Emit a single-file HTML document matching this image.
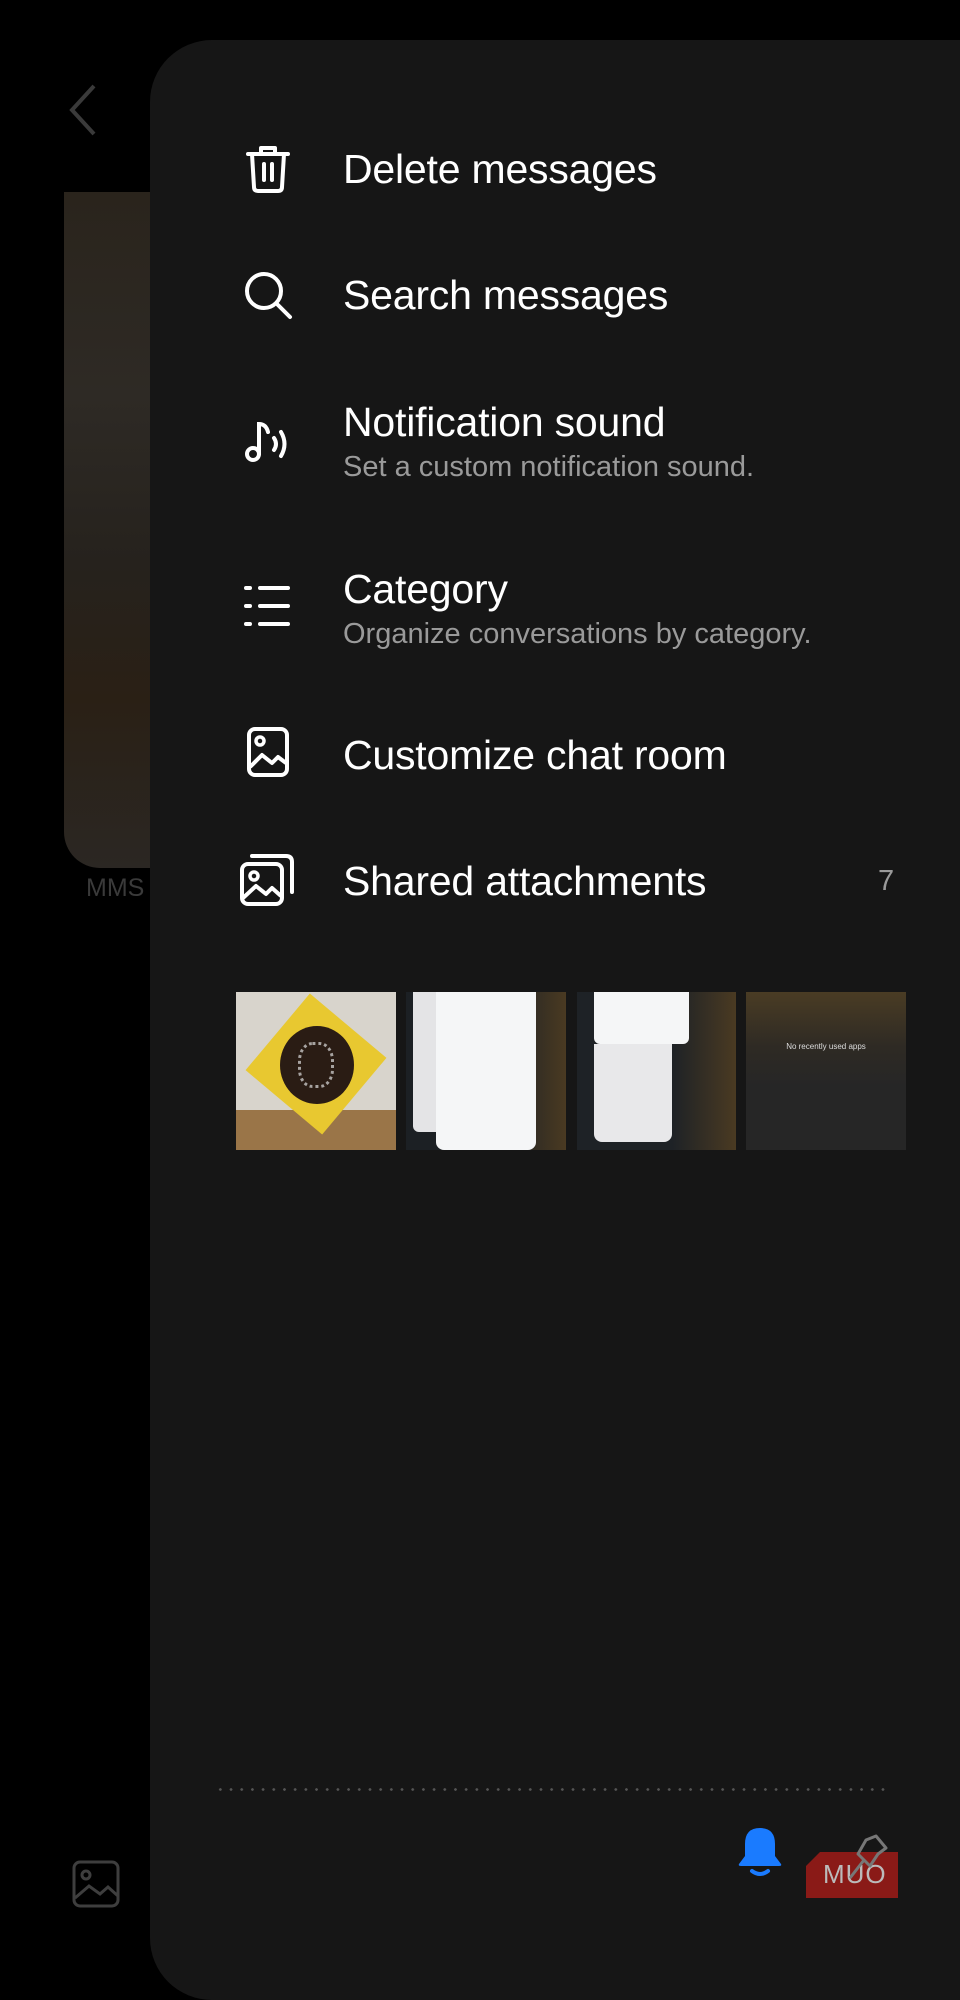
<!DOCTYPE html>
<html><head><meta charset="utf-8"><style>
*{margin:0;padding:0;box-sizing:border-box}
html,body{width:960px;height:1968px;background:#000;overflow:hidden;font-family:"Liberation Sans",sans-serif}
.abs{position:absolute}
.panel{position:absolute;left:150px;top:40px;width:840px;height:1960px;background:#161616;border-radius:62px 0 0 62px}
.t{position:absolute;left:343px;color:#fff;font-size:41px;white-space:nowrap;letter-spacing:-0.2px}
.s{position:absolute;left:343px;color:#9a9a9a;font-size:29px;white-space:nowrap}
.ic{position:absolute;left:240px;width:56px;height:56px}
svg{overflow:visible}
</style></head><body>
<svg class="abs" style="left:66px;top:84px" width="32" height="52"><path d="M28 2 L6 26 L28 50" stroke="#3a3a3a" stroke-width="4" fill="none"/></svg>
<div class="abs" style="left:64px;top:192px;width:120px;height:676px;border-radius:0 0 0 36px;background:linear-gradient(180deg,#2a241c 0%,#2e2a25 30%,#26221d 55%,#2a2015 75%,#2b2723 100%)"></div>
<div class="abs" style="left:86px;top:874px;color:#3a3a3a;font-size:25px">MMS</div>
<svg class="abs" style="left:72px;top:1860px" width="48" height="48"><rect x="2" y="2" width="44" height="44" rx="6" stroke="#3e3e3e" stroke-width="3" fill="none"/><circle cx="14" cy="15" r="4" stroke="#3e3e3e" stroke-width="3" fill="none"/><path d="M3 38 L17 26 L28 34 L36 27 L46 36" stroke="#3e3e3e" stroke-width="3" fill="none"/></svg>

<div class="panel"></div>

<svg class="ic" style="top:140px" viewBox="0 0 56 56"><path d="M8 14 H48 M21 14 V8 H35 V14 M12 14 L14 47 Q14 51 18 51 H38 Q42 51 42 47 L44 14 M24 24 V40 M32 24 V40" stroke="#fff" stroke-width="4" fill="none" stroke-linecap="round" stroke-linejoin="round"/></svg>
<div class="t" style="top:146px">Delete messages</div>

<svg class="ic" style="top:267px" viewBox="0 0 56 56"><circle cx="24" cy="24" r="17" stroke="#fff" stroke-width="4" fill="none"/><path d="M37 37 L50 50" stroke="#fff" stroke-width="4" stroke-linecap="round"/></svg>
<div class="t" style="top:272px">Search messages</div>

<svg class="ic" style="top:412px" viewBox="0 0 56 56"><circle cx="13" cy="42" r="6" stroke="#fff" stroke-width="4" fill="none"/><path d="M19 42 V12 Q26 12 28 20 M34 26 Q38 32 34 38 M41 20 Q48 32 41 44" stroke="#fff" stroke-width="4" fill="none" stroke-linecap="round"/></svg>
<div class="t" style="top:399px">Notification sound</div>
<div class="s" style="top:451px">Set a custom notification sound.</div>

<svg class="ic" style="top:578px" viewBox="0 0 56 56"><path d="M6 10 H10 M20 10 H48 M6 28 H10 M20 28 H48 M6 46 H10 M20 46 H48" stroke="#fff" stroke-width="4" stroke-linecap="round"/></svg>
<div class="t" style="top:566px">Category</div>
<div class="s" style="top:618px">Organize conversations by category.</div>

<svg class="ic" style="top:725px" viewBox="0 0 56 56"><rect x="9" y="4" width="38" height="46" rx="6" stroke="#fff" stroke-width="4" fill="none"/><circle cx="20" cy="16" r="4" stroke="#fff" stroke-width="3.5" fill="none"/><path d="M10 42 L22 30 L32 38 L38 32 L46 38" stroke="#fff" stroke-width="4" fill="none" stroke-linejoin="round"/></svg>
<div class="t" style="top:732px">Customize chat room</div>

<svg class="ic" style="top:852px" viewBox="0 0 56 56"><rect x="2" y="12" width="40" height="40" rx="6" stroke="#fff" stroke-width="4" fill="none"/><path d="M12 4 H46 Q52 4 52 10 V40" stroke="#fff" stroke-width="4" fill="none" stroke-linecap="round"/><circle cx="14" cy="24" r="4" stroke="#fff" stroke-width="3.5" fill="none"/><path d="M3 46 L16 34 L26 42 L32 36 L41 44" stroke="#fff" stroke-width="4" fill="none" stroke-linejoin="round"/></svg>
<div class="t" style="top:858px">Shared attachments</div>
<div class="abs" style="left:878px;top:865px;color:#9a9a9a;font-size:29px">7</div>

<div class="abs" style="left:236px;top:992px;width:160px;height:158px;background:#d8d4cc;overflow:hidden">
 <div class="abs" style="left:0;top:118px;width:160px;height:40px;background:#9a7548"></div>
 <div class="abs" style="left:30px;top:22px;width:100px;height:100px;background:#e8c830;transform:rotate(40deg)"></div>
 <div class="abs" style="left:44px;top:34px;width:74px;height:78px;border-radius:50%;background:#2a1c14"></div>
 <div class="abs" style="left:62px;top:50px;width:36px;height:46px;border:3px dotted #ddd;border-radius:40%;opacity:.7"></div>
</div>
<div class="abs" style="left:406px;top:992px;width:160px;height:158px;background:linear-gradient(90deg,#1c2024 0 60%,#4a3a22 100%);overflow:hidden">
 <div class="abs" style="left:7px;top:0;width:40px;height:140px;background:#e4e4e6;border-radius:0 0 6px 6px"></div>
 <div class="abs" style="left:30px;top:0;width:100px;height:158px;background:#f5f6f7;border-radius:0 0 8px 8px"></div>
</div>
<div class="abs" style="left:577px;top:992px;width:159px;height:158px;background:linear-gradient(90deg,#1e2226 0 60%,#4a3a22 100%);overflow:hidden">
 <div class="abs" style="left:17px;top:0;width:95px;height:52px;background:#f5f6f7;border-radius:0 0 6px 6px"></div>
 <div class="abs" style="left:17px;top:52px;width:78px;height:98px;background:#e8e8ea;border-radius:0 0 8px 8px"></div>
</div>
<div class="abs" style="left:746px;top:992px;width:160px;height:158px;background:linear-gradient(180deg,#4a3c24 0%,#2e2a24 35%,#262626 60%,#262626 100%)">
 <div style="position:absolute;top:50px;width:160px;text-align:center;color:#ddd;font-size:8px">No recently used apps</div>
</div>

<div class="abs" style="left:215px;top:1788px;width:676px;height:3px;background-image:radial-gradient(circle,#555 1.2px,transparent 1.5px);background-size:10.7px 3px"></div>

<svg class="abs" style="left:737px;top:1826px" width="46" height="52" viewBox="0 0 46 52"><path d="M23 2 Q8 2 8 18 V30 L2 38 Q1 40 4 40 H42 Q45 40 44 38 L38 30 V18 Q38 2 23 2Z" fill="#1a7bff"/><path d="M15 45 Q23 51 31 45" stroke="#1a7bff" stroke-width="4" fill="none" stroke-linecap="round"/></svg>
<div class="abs" style="left:806px;top:1852px;width:92px;height:46px;background:#8a1a17;clip-path:polygon(14px 0,100% 0,100% 100%,0 100%,0 14px)"></div>
<div class="abs" style="left:823px;top:1859px;color:#bbb;font-size:26px;letter-spacing:1px">MUO</div>
<svg class="abs" style="left:846px;top:1834px" width="44" height="52"><path d="M20 6 L30 2 L40 14 L32 20 L24 32 L12 20 Z M18 26 L4 44" stroke="#777" stroke-width="3" fill="none" stroke-linejoin="round"/></svg>
</body></html>
